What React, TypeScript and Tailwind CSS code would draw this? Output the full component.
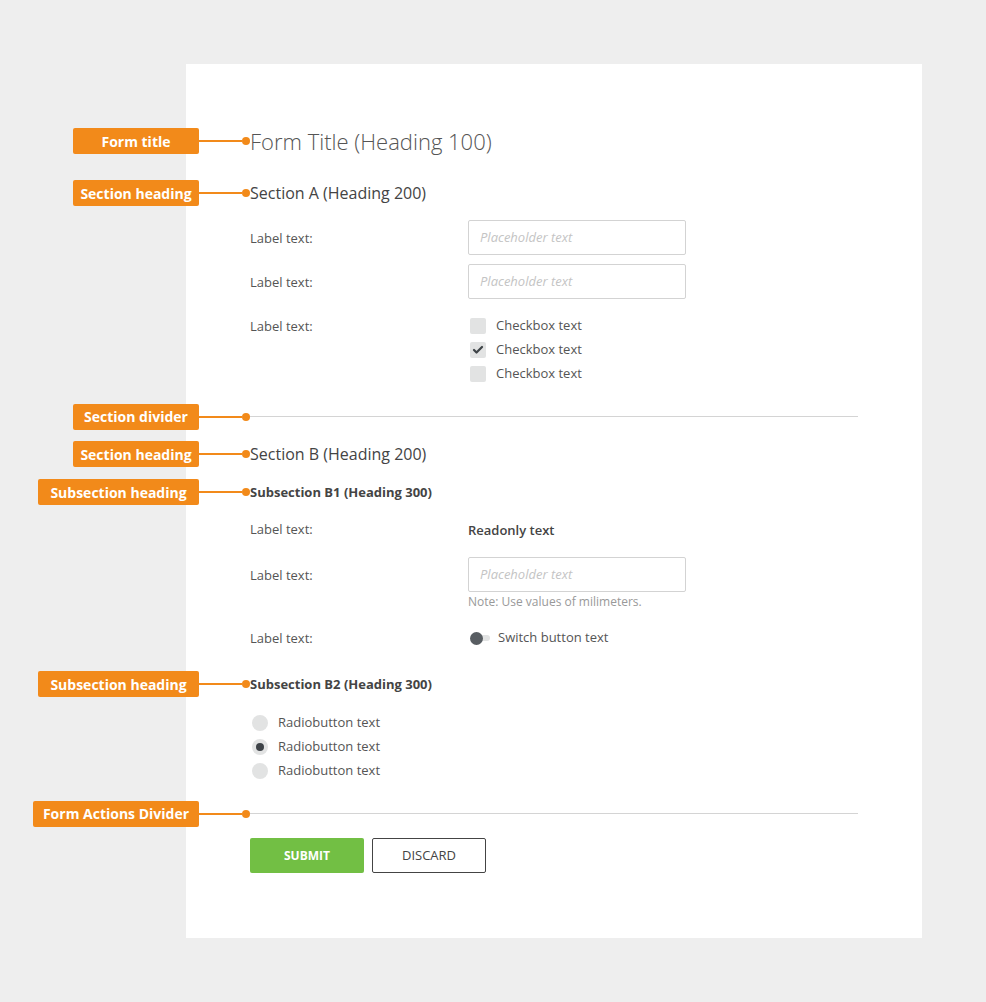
import { Check } from "lucide-react";
import type { ReactNode } from "react";

const font = { fontFamily: '"Open Sans", "Liberation Sans", sans-serif' };

function Note({ label, width = "w-[126px]", children }: { label: string; width?: string; children: ReactNode }) {
  return (
    <div className="relative">
      <div className="absolute right-full top-1/2 -translate-y-1/2 flex items-center">
        <span className={`${width} h-[26px] flex items-center justify-center rounded-[2px] bg-[#f28a1a] text-white text-[14px] font-bold whitespace-nowrap`}>
          {label}
        </span>
        <span className="w-[43px] h-[2px] bg-[#f28a1a]" />
        <span className="w-[8px] h-[8px] rounded-full bg-[#f28a1a]" />
      </div>
      {children}
    </div>
  );
}

function Field({ label, children, align = "center" }: { label: string; children: ReactNode; align?: "center" | "start" }) {
  return (
    <div className={`flex ${align === "center" ? "items-center" : "items-start"}`}>
      <div className="w-[218px] text-[13px] leading-[24px] text-[#555]">{label}</div>
      <div>{children}</div>
    </div>
  );
}

function TextInput() {
  return (
    <div className="w-[218px] h-[35px] border border-[#d3d3d3] rounded-[2px] flex items-center px-[11px] text-[13px] italic text-[#c4c4c4]">
      Placeholder text
    </div>
  );
}

function Checkbox({ checked, text }: { checked?: boolean; text: string }) {
  return (
    <div className="flex items-center h-[24px]">
      <span className="w-[16px] h-[16px] ml-[2px] rounded-[2px] bg-[#e2e3e3] flex items-center justify-center">
        {checked && <Check size={12} strokeWidth={4.5} color="#3f4448" />}
      </span>
      <span className="ml-[10px] text-[13px] text-[#555]">{text}</span>
    </div>
  );
}

function Radio({ checked, text }: { checked?: boolean; text: string }) {
  return (
    <div className="flex items-center h-[24px]">
      <span className="w-[16px] h-[16px] ml-[2px] rounded-full bg-[#e2e3e3] flex items-center justify-center">
        {checked && <span className="w-[8px] h-[8px] rounded-full bg-[#3d4247]" />}
      </span>
      <span className="ml-[10px] text-[13px] text-[#555]">{text}</span>
    </div>
  );
}

function Divider({ label, width, className }: { label: string; width?: string; className: string }) {
  return (
    <div className={className}>
      <Note label={label} width={width}>
        <div className="-ml-[4px] h-[1px] bg-[#d4d4d4]" />
      </Note>
    </div>
  );
}

export default function App() {
  return (
    <div className="min-h-[1002px] bg-[#eeeeee] pt-[64px] pb-[64px]" style={font}>
      <div className="ml-[186px] w-[736px] bg-white pt-[62px] pb-[65px] px-[64px] text-[#444]">
        <Note label="Form title">
          <h1 className="text-[22px] leading-[30px] font-light text-[#555]">Form Title (Heading 100)</h1>
        </Note>

        <div className="mt-[26px]">
          <Note label="Section heading">
            <h2 className="text-[16px] leading-[22px] text-[#444]">Section A (Heading 200)</h2>
          </Note>
        </div>

        <div className="mt-[16px] flex flex-col gap-[9px]">
          <Field label="Label text:">
            <TextInput />
          </Field>
          <Field label="Label text:">
            <TextInput />
          </Field>
        </div>

        <div className="mt-[15px]">
          <Field label="Label text:" align="start">
            <Checkbox text="Checkbox text" />
            <Checkbox checked text="Checkbox text" />
            <Checkbox text="Checkbox text" />
          </Field>
        </div>

        <Divider label="Section divider" className="mt-[30px]" />

        <div className="mt-[26px]">
          <Note label="Section heading">
            <h2 className="text-[16px] leading-[22px] text-[#444]">Section B (Heading 200)</h2>
          </Note>
        </div>

        <div className="mt-[17px]">
          <Note label="Subsection heading" width="w-[161px]">
            <h3 className="text-[13px] leading-[20px] font-bold text-[#444]">Subsection B1 (Heading 300)</h3>
          </Note>
        </div>

        <div className="mt-[15px]">
          <Field label="Label text:">
            <span className="text-[13px] font-semibold text-[#444]">Readonly text</span>
          </Field>
        </div>

        <div className="mt-[16px]">
          <Field label="Label text:">
            <TextInput />
          </Field>
          <div className="ml-[218px] mt-[2px] text-[12px] leading-[16px] text-[#999]">Note: Use values of milimeters.</div>
        </div>

        <div className="mt-[16px]">
          <Field label="Label text:">
            <div className="flex items-center">
              <span className="relative w-[22px] h-[13px] ml-[2px]">
                <span className="absolute left-[7px] top-[3.5px] w-[13px] h-[6px] rounded-full bg-[#e2e3e3]" />
                <span className="absolute left-0 top-0 w-[13px] h-[13px] rounded-full bg-[#585d62]" />
              </span>
              <span className="ml-[6px] text-[13px] text-[#555]">Switch button text</span>
            </div>
          </Field>
        </div>

        <div className="mt-[24px]">
          <Note label="Subsection heading" width="w-[161px]">
            <h3 className="text-[13px] leading-[20px] font-bold text-[#444]">Subsection B2 (Heading 300)</h3>
          </Note>
        </div>

        <div className="mt-[17px]">
          <Radio text="Radiobutton text" />
          <Radio checked text="Radiobutton text" />
          <Radio text="Radiobutton text" />
        </div>

        <Divider label="Form Actions Divider" width="w-[166px]" className="mt-[30px]" />

        <div className="mt-[24px] flex gap-[8px]">
          <button className="w-[114px] h-[35px] rounded-[2px] bg-[#72bf44] text-white text-[12px] font-bold">SUBMIT</button>
          <button className="w-[114px] h-[35px] rounded-[2px] border border-[#444] bg-white text-[#444] text-[13px] font-normal">DISCARD</button>
        </div>
      </div>
    </div>
  );
}
